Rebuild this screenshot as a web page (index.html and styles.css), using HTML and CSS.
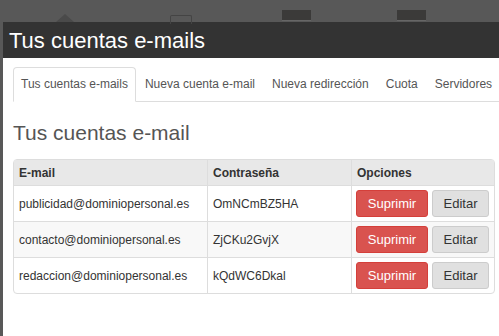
FILE: index.html
```html
<!DOCTYPE html>
<html lang="es">
<head>
    <meta charset="UTF-8">
    <title>Tus cuentas e-mails</title>
    <link rel="stylesheet" href="styles.css">
</head>
<body>

<div class="topbar">
    <span class="caret"></span>
    <span class="case"></span>
    <span class="block block-a"></span>
    <span class="block block-b"></span>
</div>

<div class="modal">
    <div class="modal-header">Tus cuentas e-mails</div>
    <div class="modal-body">
        <ul class="tabs">
            <li class="active">Tus cuentas e-mails</li>
            <li>Nueva cuenta e-mail</li>
            <li>Nueva redirección</li>
            <li>Cuota</li>
            <li>Servidores</li>
        </ul>

        <h3>Tus cuentas e-mail</h3>

        <table class="accounts">
            <thead>
                <tr>
                    <th class="col-mail">E-mail</th>
                    <th class="col-pass">Contraseña</th>
                    <th>Opciones</th>
                </tr>
            </thead>
            <tbody>
                <tr>
                    <td>publicidad@dominiopersonal.es</td>
                    <td>OmNCmBZ5HA</td>
                    <td class="actions"><button class="btn btn-red">Suprimir</button><button class="btn btn-gray">Editar</button></td>
                </tr>
                <tr>
                    <td>contacto@dominiopersonal.es</td>
                    <td>ZjCKu2GvjX</td>
                    <td class="actions"><button class="btn btn-red">Suprimir</button><button class="btn btn-gray">Editar</button></td>
                </tr>
                <tr>
                    <td>redaccion@dominiopersonal.es</td>
                    <td>kQdWC6Dkal</td>
                    <td class="actions"><button class="btn btn-red">Suprimir</button><button class="btn btn-gray">Editar</button></td>
                </tr>
            </tbody>
        </table>
    </div>
</div>

</body>
</html>
```

FILE: styles.css
```css
html, body {
    margin: 0;
    height: 100%;
    overflow: hidden;
}
body {
    font-family: "Liberation Sans", Arial, sans-serif;
    background-color: #585858;
    color: #333;
}
.topbar {
    position: relative;
    height: 22px;
}
.caret {
    position: absolute;
    left: 56px;
    top: 14px;
    width: 0;
    height: 0;
    border-left: 9px solid transparent;
    border-right: 9px solid transparent;
    border-bottom: 8px solid #4a4a4a;
}
.case {
    position: absolute;
    left: 170px;
    top: 15px;
    width: 20px;
    height: 8px;
    border: 1px solid #444;
    border-bottom: none;
    border-radius: 2px 2px 0 0;
}
.block {
    position: absolute;
    top: 10px;
    width: 29px;
    height: 10px;
    background: #3b3a39;
    border-bottom: 1px solid #666;
}
.block-a { left: 282px; }
.block-b { left: 397px; }
.modal {
    margin-left: 3px;
    width: 560px;
    background: #fff;
    height: 400px;
}
.modal-header {
    background: #333;
    color: #fff;
    font-size: 22px;
    height: 36px;
    line-height: 38px;
    padding-left: 6px;
}
.modal-body {
    padding: 9px 0 0 10px;
}
.tabs {
    list-style: none;
    margin: 0;
    padding: 0;
    display: flex;
    border-bottom: 1px solid #ddd;
    width: 486px;
    font-size: 12px;
    color: #555;
    white-space: nowrap;
}
.tabs li {
    flex: none;
    height: 33px;
    line-height: 33px;
    padding: 0 7px;
    margin-right: 1px;
    margin-bottom: -1px;
    border: 1px solid transparent;
    border-radius: 4px 4px 0 0;
}
.tabs li.active {
    border-color: #ddd;
    border-bottom-color: #fff;
    background: #fff;
}
h3 {
    font-size: 21px;
    font-weight: normal;
    color: #555;
    margin: 19px 0 0;
    line-height: 24px;
}
.accounts {
    margin-top: 14px;
    width: 482px;
    table-layout: fixed;
    border-collapse: separate;
    border-spacing: 0;
    border: 1px solid #ddd;
    border-radius: 4px;
    font-size: 12px;
}
.accounts th {
    background: #e8e8e8;
    text-align: left;
    height: 25px;
    padding: 0 5px;
    border-bottom: 1px solid #ddd;
}
.accounts td {
    height: 35px;
    padding: 0 5px;
    border-bottom: 1px solid #ddd;
    white-space: nowrap;
}
.accounts th + th, .accounts td + td {
    border-left: 1px solid #ddd;
}
.accounts td.actions {
    padding: 0 4px;
}
.accounts tbody tr:nth-child(2) td {
    background: #f8f8f8;
}
.accounts tbody tr:last-child td {
    border-bottom: none;
}
.col-mail { width: 183px; }
.col-pass { width: 133px; }
.btn {
    font-family: inherit;
    font-size: 13px;
    height: 27px;
    border-radius: 3px;
    padding: 0;
    margin-right: 4px;
    vertical-align: middle;
}
.btn-red {
    background: #d9534f;
    color: #fff;
    border: 1px solid #d43f3a;
    width: 72px;
}
.btn-gray {
    background: #e0e0e0;
    color: #333;
    border: 1px solid #ccc;
    width: 57px;
    margin-right: 0;
}
```
